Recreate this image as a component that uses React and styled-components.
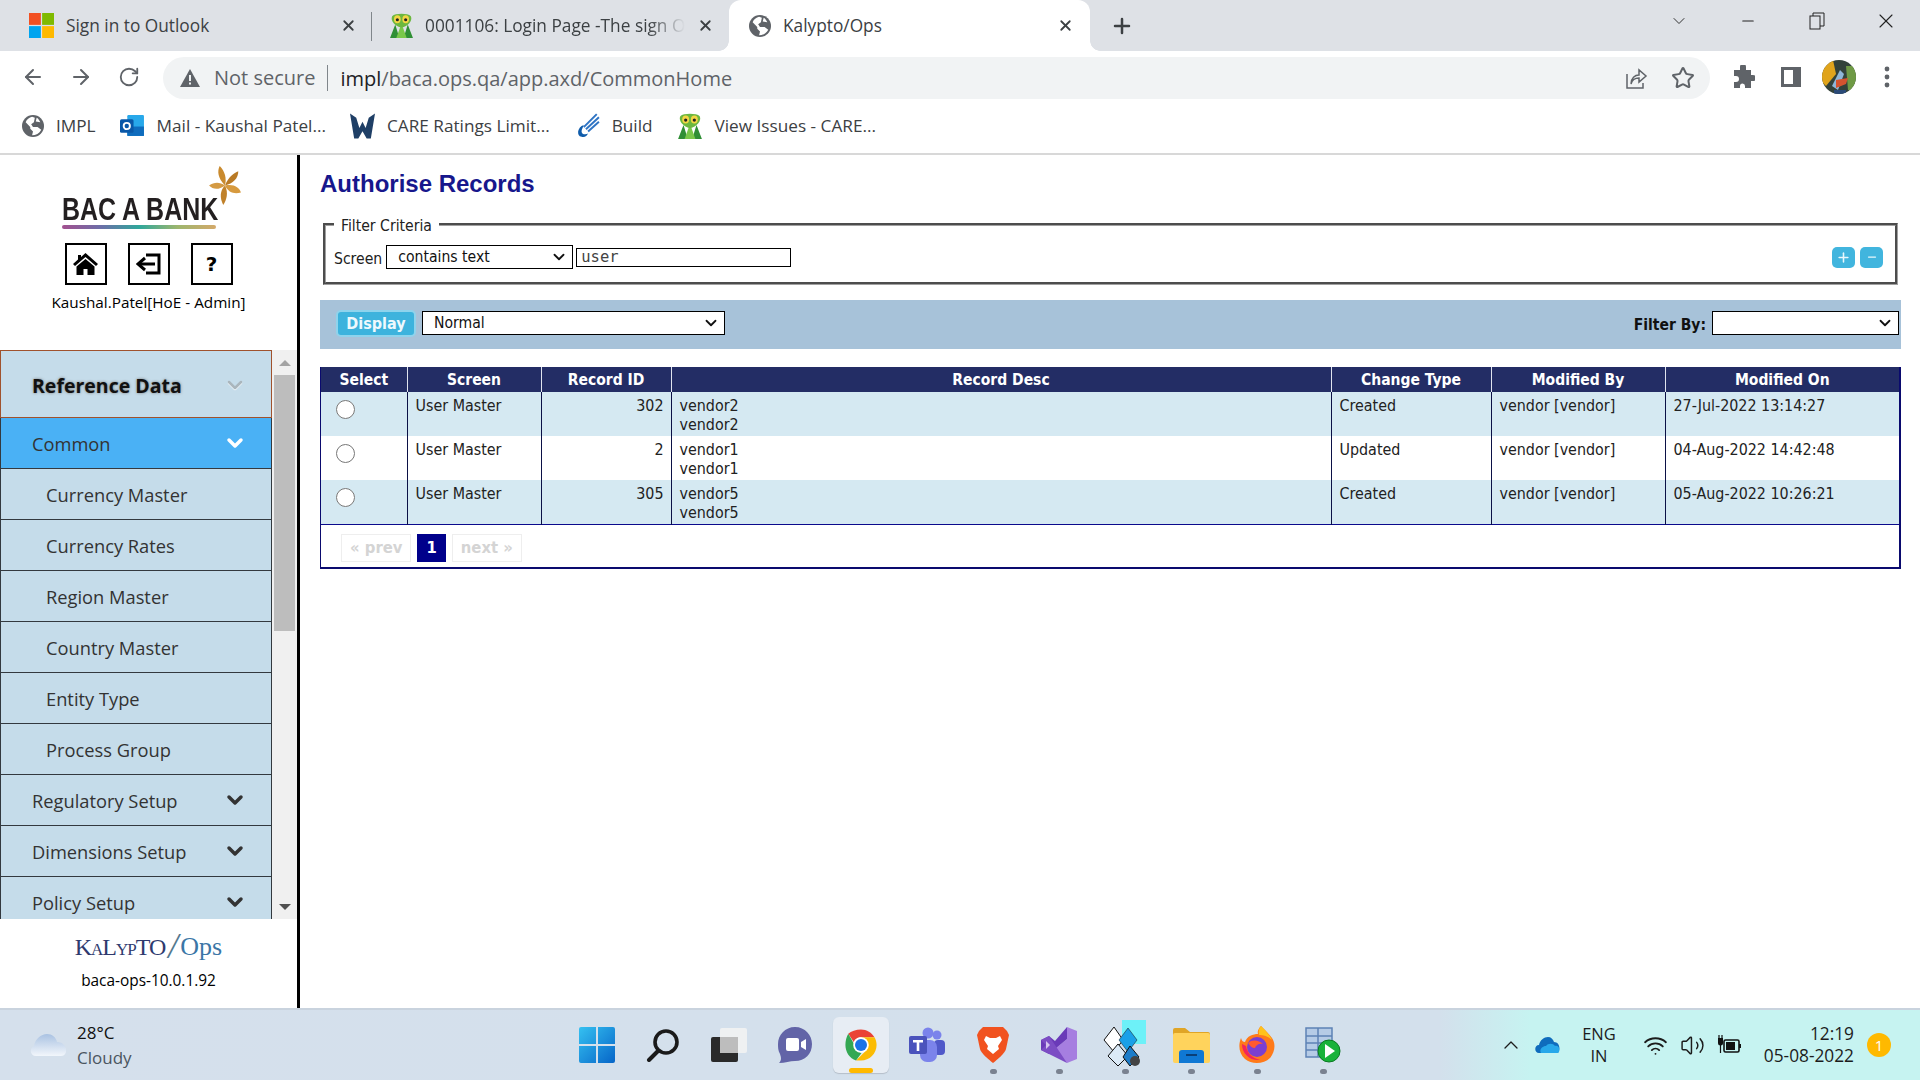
import styled, { createGlobalStyle } from "styled-components";
import { ArrowLeft, ArrowRight, RotateCw, Star, X, Plus, Minus, ChevronDown, ChevronUp, Wifi, Volume2 } from "lucide-react";

const uiFont = `"Open Sans", "Noto Sans", sans-serif`;
const tableFont = `"DejaVu Sans Condensed", "DejaVu Sans", sans-serif`;

const Global = createGlobalStyle`
  html, body { margin: 0; padding: 0; background: #fff; }
  body { font-family: ${uiFont}; overflow: hidden; }
  * { box-sizing: border-box; }
`;

const Page = styled.div`
  width: 1920px;
  height: 1080px;
  display: flex;
  flex-direction: column;
  overflow: hidden;
`;

/* browser chrome */
const TabStrip = styled.div`
  height: 51px;
  background: #dee1e6;
  display: flex;
  align-items: center;
  flex: none;
`;
const Tab = styled.div`
  position: relative;
  width: ${(p) => p.$w}px;
  height: 51px;
  display: flex;
  align-items: center;
  padding-left: ${(p) => p.$pad}px;
  gap: ${(p) => p.$gap || 12}px;
  font-size: 17.3px;
  color: #3c4043;
  background: ${(p) => (p.$active ? "#fff" : "transparent")};
  border-radius: ${(p) => (p.$active ? "12px 12px 0 0" : "0")};
  ${(p) =>
    p.$sep &&
    `&::after { content: ""; position: absolute; right: 0; top: 12px; height: 29px; width: 1px; background: #80868b; }`}
  ${(p) =>
    p.$active &&
    `&::before, &::after { content: ""; position: absolute; bottom: 0; width: 10px; height: 10px; }
     &::before { left: -10px; background: radial-gradient(circle at 0 0, #dee1e6 9.5px, #fff 10px); }
     &::after { right: -10px; background: radial-gradient(circle at 100% 0, #dee1e6 9.5px, #fff 10px); }`}
`;
const TabTitle = styled.span`
  white-space: nowrap;
  ${(p) => p.$fade && "mask-image: linear-gradient(90deg, #000 86%, transparent 100%);"}
`;
const TabClose = styled(X)`
  position: absolute;
  right: ${(p) => p.$r}px;
  top: 17px;
  color: #3c4043;
`;
const NewTab = styled.div`
  margin-left: 20px;
  display: flex;
  color: #3c4043;
`;
const WindowControls = styled.div`
  margin-left: auto;
  display: flex;
  align-items: center;
  height: 42px;
  align-self: flex-start;
`;
const WinButton = styled.div`
  width: 69px;
  display: flex;
  justify-content: center;
  color: #222;
`;
const Toolbar = styled.div`
  height: 51px;
  flex: none;
  display: flex;
  align-items: center;
  position: relative;
  padding-left: 9px;
  background: #fff;
`;
const NavBtn = styled.div`
  width: ${(p) => p.$w || 48}px;
  display: flex;
  justify-content: center;
  color: #5f6368;
`;
const Omnibox = styled.div`
  margin-left: 10px;
  width: 1547px;
  height: 42px;
  margin-top: 3px;
  border-radius: 21px;
  background: #f1f3f4;
  display: flex;
  align-items: center;
  padding: 0 0 0 17px;
  font-size: 20px;
  color: #5f6368;
`;
const NotSecure = styled.span`
  margin-left: 14px;
  padding-right: 12px;
  border-right: 1px solid #80868b;
  line-height: 26px;
`;
const Url = styled.span`
  margin-left: 12px;
  b { font-weight: 400; color: #202124; }
`;
const OmniIcons = styled.div`
  margin-left: auto;
  display: flex;
  align-items: center;
  gap: 23px;
  padding-right: 15px;
  color: #5f6368;
`;
const ToolIcons = styled.div`
  display: flex;
  align-items: center;
  margin-left: 9px;
`;
const Bookmarks = styled.div`
  height: 53px;
  flex: none;
  display: flex;
  align-items: center;
  padding: 0 0 4px 22px;
  gap: 24px;
  border-bottom: 2px solid #d8d8d8;
  font-size: 17.2px;
  color: #3c4043;
`;
const Bookmark = styled.div`
  display: flex;
  align-items: center;
  gap: 12px;
  white-space: nowrap;
`;

/* content */
const Content = styled.div`
  flex: 1;
  display: flex;
  min-height: 0;
`;
const Sidebar = styled.aside`
  width: 300px;
  flex: none;
  border-right: 3px solid #000;
  display: flex;
  flex-direction: column;
`;
const Brand = styled.div`
  height: 195px;
  flex: none;
  display: flex;
  flex-direction: column;
  align-items: center;
  padding-top: 8px;
`;
const BankLogo = styled.div`
  position: relative;
  width: 180px;
  height: 79px;
`;
const BankName = styled.div`
  position: absolute;
  left: 3px;
  top: 27px;
  font-family: "Liberation Sans", sans-serif;
  font-weight: 700;
  font-size: 32px;
  line-height: 38px;
  color: #231f20;
  white-space: nowrap;
  transform: scaleX(0.78);
  transform-origin: left center;
`;
const BankLine = styled.div`
  position: absolute;
  left: 3px;
  top: 62px;
  width: 154px;
  height: 4px;
  border-radius: 2px;
  background: linear-gradient(90deg, #a3508f, #6d6ea8, #2fa79b, #9db66e, #d4a96a);
`;
const BankStar = styled.svg`
  position: absolute;
  left: 150px;
  top: 3px;
`;
const QuickRow = styled.div`
  display: flex;
  gap: 21px;
  margin-top: 1px;
`;
const QuickBtn = styled.div`
  width: 42px;
  height: 42px;
  border: 2px solid #000;
  display: flex;
  align-items: center;
  justify-content: center;
  font-family: "DejaVu Sans", sans-serif;
  font-weight: 700;
  font-size: 20px;
  color: #000;
`;
const UserName = styled.div`
  margin-top: 7px;
  font-size: 15.3px;
  line-height: 20px;
  color: #000;
`;
const MenuArea = styled.div`
  height: 569px;
  flex: none;
  display: flex;
  background: #f0f0f0;
`;
const Menu = styled.nav`
  width: 272px;
  flex: none;
  overflow: hidden;
`;
const MenuHead = styled.div`
  height: 68px;
  background: #c5dcea;
  border: 1px solid #a0522d;
  display: flex;
  align-items: center;
  justify-content: space-between;
  padding: 2px 24px 0 31px;
  font-size: 19.5px;
  font-weight: 700;
  color: #111;
  text-shadow: 0 0 3px #777;
  svg { filter: drop-shadow(0 1px 0 #eef4f8); }
`;
const MenuItem = styled.div`
  height: 51px;
  flex: none;
  background: ${(p) => (p.$open ? "#4ab1f5" : "#c5dcea")};
  border: 1px solid #33393f;
  border-top: none;
  display: flex;
  align-items: center;
  justify-content: space-between;
  padding: 0 24px 0 ${(p) => (p.$sub ? 45 : 31)}px;
  font-size: 18.3px;
  color: #333;
  svg { color: ${(p) => (p.$open ? "#fff" : "#333")}; }
`;
const ScrollBar = styled.div`
  width: 21px;
  margin-left: 2px;
  display: flex;
  flex-direction: column;
  align-items: center;
`;
const Arrow = styled.div`
  height: 25px;
  display: flex;
  align-items: center;
  justify-content: center;
  &::before {
    content: "";
    border-left: 6px solid transparent;
    border-right: 6px solid transparent;
    ${(p) => (p.$up ? "border-bottom: 6px solid #a3a3a3;" : "border-top: 6px solid #505050;")}
  }
`;
const Thumb = styled.div`
  width: 21px;
  height: 256px;
  background: #bdbdbd;
`;
const Spacer = styled.div`
  flex: 1;
`;
const SideFoot = styled.div`
  flex: 1;
  display: flex;
  flex-direction: column;
  align-items: center;
`;
const Kalypto = styled.div`
  margin-top: 10px;
  height: 35px;
  font-family: "Liberation Serif", serif;
  font-size: 17px;
  line-height: 35px;
  color: #2f3a6e;
  letter-spacing: -1px;
  white-space: nowrap;
  b { font-weight: 400; font-size: 24px; }
  i { font-size: 36px; font-weight: 400; color: #54798f; margin: 0 3px; vertical-align: -3px; }
  em { font-style: normal; font-size: 26px; color: #3b76a6; letter-spacing: 0; }
`;
const Version = styled.div`
  margin-top: 7px;
  font-size: 15.4px;
  line-height: 20px;
  color: #000;
`;

const Main = styled.main`
  flex: 1;
  min-width: 0;
  padding: 14px 19px 0 20px;
  display: flex;
  flex-direction: column;
`;
const Title = styled.h1`
  margin: 0;
  font-family: "Liberation Sans", sans-serif;
  font-size: 24px;
  line-height: 30px;
  font-weight: 700;
  color: #17178c;
`;
const Fieldset = styled.fieldset`
  margin: 14px 3px 0 3px;
  padding: 9px 13px 0 8px;
  height: 72px;
  border: 3px groove #a0a0a0;
  min-width: 0;
  font-family: ${tableFont};
  font-size: 15.6px;
  color: #222;
`;
const Legend = styled.legend`
  padding: 4px 7px 0;
  font-size: 15.6px;
  line-height: 19px;
`;
const FilterRow = styled.div`
  display: flex;
  align-items: center;
`;
const FilterLabel = styled.label`
  margin-top: 3px;
  margin-right: 4px;
`;
const Dropdown = styled.div`
  position: relative;
  flex: none;
  width: ${(p) => p.$w}px;
  height: 24px;
  svg {
    position: absolute;
    right: 5px;
    top: 3px;
    color: #111;
    pointer-events: none;
  }
`;
const Select = styled.select`
  appearance: none;
  display: block;
  width: 100%;
  height: 100%;
  border: 1.5px solid #000;
  border-radius: 0;
  background-color: #fff;
  padding-left: 11px;
  font-family: ${tableFont};
  font-size: 15.6px;
  color: #111;
`;
const TextBox = styled.input`
  width: 215px;
  height: 19px;
  margin-left: 3px;
  border: 1.5px solid #000;
  padding: 0 4px;
  font-family: "DejaVu Sans Mono", monospace;
  font-size: 15.5px;
  color: #444;
  outline: none;
`;
const MiniBtns = styled.div`
  margin-left: auto;
  display: flex;
  gap: 5px;
  margin-right: -1px;
`;
const MiniBtn = styled.div`
  width: 23px;
  height: 21px;
  border-radius: 5px;
  background: #41b5de;
  color: #e8f7fc;
  display: flex;
  align-items: center;
  justify-content: center;
`;
const Band = styled.div`
  margin-top: 15px;
  height: 49px;
  background: #a7c2d9;
  display: flex;
  align-items: center;
  padding: 0 2px 3px 16px;
`;
const DisplayBtn = styled.button`
  width: 80px;
  height: 27px;
  margin-right: 6px;
  background: #3db3dd;
  border: 2px solid #8fd3ec;
  border-radius: 5px;
  color: #eef9fd;
  font-family: ${tableFont};
  font-size: 16px;
  font-weight: 700;
  padding: 0;
`;
const FilterBy = styled.label`
  margin-left: auto;
  margin-right: 6px;
  margin-top: 3px;
  font-family: ${tableFont};
  font-size: 15.5px;
  font-weight: 700;
  color: #111;
`;
const Grid = styled.div`
  margin-top: 18px;
  width: 1581px;
  height: 202px;
  border-right: 2px solid #0a0a6e;
  border-left: 1px solid #0a0a6e;
  border-bottom: 2px solid #0a0a6e;
`;
const Table = styled.table`
  width: 100%;
  border-collapse: collapse;
  table-layout: fixed;
  font-family: ${tableFont};
  font-size: 15.9px;
  line-height: 19px;
  color: #222;
  border-bottom: 1px solid #0a0a8c;
`;
const Th = styled.th`
  height: 25px;
  padding: 2px 0 0;
  background: #232d65;
  color: #fff;
  font-size: 15.5px;
  line-height: 19px;
  font-weight: 700;
  border-left: 1px solid #dfe3ee;
  &:first-child { border-left: none; }
`;
const Tr = styled.tr`
  height: 44px;
  background: ${(p) => (p.$alt ? "#d5e9f2" : "#fff")};
`;
const Td = styled.td`
  padding: 4px 7px 0 8px;
  vertical-align: top;
  border-left: 1px solid #0b1146;
  text-align: ${(p) => (p.$right ? "right" : "left")};
  &:first-child { border-left: none; padding: 8px 0 0 15px; }
`;
const Radio = styled.input`
  width: 19px;
  height: 19px;
  margin: 0;
  display: block;
`;
const Pager = styled.div`
  display: flex;
  gap: 6px;
  padding: 9px 0 0 20px;
  font-family: ${tableFont};
  font-weight: 700;
  font-size: 16.5px;
`;
const PageBtn = styled.div`
  height: 28px;
  padding: 0 8px;
  min-width: ${(p) => (p.$current ? 28 : 68)}px;
  display: flex;
  align-items: center;
  justify-content: center;
  color: ${(p) => (p.$current ? "#fff" : "#d4d4d4")};
  background: ${(p) => (p.$current ? "#00008b" : "#fff")};
  border: 1px solid ${(p) => (p.$current ? "#00008b" : "#eeeeee")};
`;

/* taskbar */
const Taskbar = styled.div`
  height: 72px;
  flex: none;
  display: flex;
  align-items: center;
  background: linear-gradient(90deg, #d5e0ec 0, #d3e0ec 1440px, #c6f3f1 1530px);
  border-top: 2px solid #c9d3de;
  position: relative;
`;
const Weather = styled.div`
  width: 564px;
  flex: none;
  display: flex;
  align-items: center;
  gap: 10px;
  padding-left: 29px;
  font-size: 17px;
  line-height: 25px;
  color: #111;
  small { display: block; font-size: 17px; color: #4b5560; }
`;
const AppSlots = styled.div`
  display: flex;
`;
const AppSlot = styled.div`
  position: relative;
  width: 66px;
  height: 56px;
  display: flex;
  align-items: center;
  justify-content: center;
  border-radius: 6px;
  ${(p) => p.$active && "background: #e7edf4; box-shadow: 0 1px 1px #b5bec9; width: 56px; margin: 0 5px;"}
  ${(p) =>
    p.$dot &&
    `&::after { content: ""; position: absolute; left: 30px; bottom: -1px; width: 7px; height: 5px; border-radius: 3px; background: #7a8290; }`}
  ${(p) =>
    p.$active &&
    `&::after { content: ""; position: absolute; left: 16px; bottom: 0; width: 24px; height: 5px; border-radius: 3px; background: #ffb900; }`}
`;
const Tray = styled.div`
  margin-left: 143px;
  display: flex;
  align-items: center;
  color: #1c1c1c;
`;
const TrayGap = styled.span`
  width: 12px;
`;
const Lang = styled.div`
  width: 34px;
  margin-left: 22px;
  font-size: 16.5px;
  line-height: 22px;
  text-align: center;
`;
const TrayIcons = styled.div`
  margin-left: 27px;
  display: flex;
  align-items: center;
  gap: 12px;
`;
const Clock = styled.div`
  width: 100px;
  margin-left: 12px;
  text-align: right;
  font-size: 17.3px;
  line-height: 22px;
`;
const Badge = styled.div`
  width: 24px;
  height: 24px;
  margin-left: 13px;
  border-radius: 50%;
  background: #ffb900;
  color: #fff;
  font-size: 15px;
  display: flex;
  align-items: center;
  justify-content: center;
`;

/* drawings */
const MsLogo = () => (
  <svg width="25" height="25" viewBox="0 0 24 24">
    <rect width="11.4" height="11.4" fill="#f25022" />
    <rect x="12.6" width="11.4" height="11.4" fill="#7fba00" />
    <rect y="12.6" width="11.4" height="11.4" fill="#00a4ef" />
    <rect x="12.6" y="12.6" width="11.4" height="11.4" fill="#ffb900" />
  </svg>
);
const Mantis = ({ s = 25 }) => (
  <svg width={s} height={s} viewBox="0 0 24 24">
    <path d="M1 24 L6 11 L10 24Z M23 24 L18 11 L14 24Z" fill="#2f8f35" />
    <path d="M7 24 L12 10 L17 24Z" fill="#79c84a" />
    <path d="M3 3 C6 0 18 0 21 3 C23 7 18 13 12 14 C6 13 1 7 3 3Z" fill="#6cb83f" />
    <ellipse cx="8" cy="6" rx="3.200" ry="3.800" fill="#f3d545" />
    <ellipse cx="16" cy="6" rx="3.200" ry="3.800" fill="#f3d545" />
    <circle cx="8" cy="6.500" r="1.500" fill="#222" />
    <circle cx="16" cy="6.500" r="1.500" fill="#222" />
  </svg>
);
const Globe = ({ s = 22 }) => (
  <svg width={s} height={s} viewBox="0 0 24 24">
    <circle cx="12" cy="12" r="12" fill="#5f6368" />
    <path d="M11 2 C8 3 5 5 4 8 L9 13 L9 15 L12 18 L11 22 C15 22 19 20 21 16 L17 13 L12 13 L10 10 L13 8 L14 3Z M16 3 L15 7 L20 8 C19 6 18 4 16 3Z" fill="#fff" />
  </svg>
);
const Warn = () => (
  <svg width="20" height="18" viewBox="0 0 20 18">
    <path d="M10 0 L20 18 H0Z" fill="#5f6368" />
    <rect x="9" y="6" width="2" height="6" fill="#f1f3f4" />
    <rect x="9" y="13.5" width="2" height="2" fill="#f1f3f4" />
  </svg>
);
const ShareIcon = () => (
  <svg width="24" height="24" viewBox="0 0 24 24" fill="none" stroke="#5f6368" strokeWidth="1.5">
    <path d="M3 8 V22 H19 V17" />
    <path d="M7 18 C7 12 11 9 15 9 V4 L22 10 L15 16 V12 C11 12 8 14 7 18Z" />
  </svg>
);
const PuzzleIcon = () => (
  <svg width="24" height="24" viewBox="0 0 24 24" fill="#5f6368">
    <path d="M9 2 a3 3 0 0 1 6 0 V5 H20 V10 h2 a3 3 0 0 1 0 6 h-2 V23 H14 v-2 a2.5 2.5 0 0 0 -5 0 v2 H3 V17 h2 a3 3 0 0 0 0 -6 H3 V5 H9Z" />
  </svg>
);
const PanelIcon = () => (
  <svg width="22" height="22" viewBox="0 0 22 22">
    <path fillRule="evenodd" d="M1 1 H21 V21 H1Z M4 4 V18 H13 V4Z" fill="#5f6368" />
  </svg>
);
const Avatar = () => (
  <svg width="34" height="34" viewBox="0 0 34 34">
    <clipPath id="av"><circle cx="17" cy="17" r="17" /></clipPath>
    <g clipPath="url(#av)">
      <rect width="34" height="34" fill="#33423a" />
      <path d="M0 6 L11 0 L14 14 L4 26 L0 22Z" fill="#e0a41c" />
      <path d="M24 6 H34 V30 H26Z" fill="#6f9a45" />
      <path d="M10 26 L18 10 L22 14 L16 30Z" fill="#8fb6d8" />
      <path d="M14 20 L26 18 L24 24 L14 28Z" fill="#d5532f" />
      <path d="M12 30 H24 V34 H12Z" fill="#2b4a78" />
    </g>
  </svg>
);
const Dots = () => (
  <svg width="6" height="22" viewBox="0 0 6 22" fill="#5f6368">
    <circle cx="3" cy="3" r="2.4" /><circle cx="3" cy="11" r="2.4" /><circle cx="3" cy="19" r="2.4" />
  </svg>
);
const OutlookIcon = () => (
  <svg width="25" height="25" viewBox="0 0 24 24">
    <rect x="7" y="2" width="16" height="20" rx="1" fill="#28a8ea" />
    <path d="M7 13 L23 13 V22 H7Z" fill="#0f6cbd" />
    <rect x="0" y="6" width="13" height="13" rx="1.5" fill="#0a58a8" />
    <circle cx="6.5" cy="12.5" r="3" fill="none" stroke="#fff" strokeWidth="1.8" />
  </svg>
);
const WLogo = () => (
  <svg width="25" height="26" viewBox="0 0 24 24">
    <path d="M0 0 L6 4 L9 14 L12 8 L15 14 L18 4 L24 0 L20 24 H16 L12 17 L8 24 H4Z" fill="#1f3f66" />
  </svg>
);
const BuildIcon = () => (
  <svg width="26" height="26" viewBox="0 0 24 24" fill="none">
    <path d="M21 1 L9 13 M23 4 L11 15 M23 8 L13 17" stroke="#2f74c4" strokeWidth="1.8" />
    <path d="M9 11 C3 13 2 21 7 22 C10 23 12 21 13 19 C11 20 7 20 7 17 C7 15 8 14 9 11Z" fill="#0f5cab" />
  </svg>
);
const Flower = () => (
  <BankStar width="32" height="39" viewBox="0 0 36 44">
    <path d="M18 22 C10 14 9 6 12 0 C18 6 20 14 18 22Z" fill="#c98a2e" />
    <path d="M18 22 C22 12 28 8 33 6 C33 14 27 20 18 22Z" fill="#b97a25" />
    <path d="M18 22 C28 20 34 24 36 30 C28 32 22 30 18 22Z" fill="#d79a3e" />
    <path d="M18 22 C22 30 20 38 16 44 C12 36 12 28 18 22Z" fill="#c0812a" />
    <path d="M18 22 C10 28 4 26 0 22 C6 18 12 18 18 22Z" fill="#d49a43" />
  </BankStar>
);
const HomeIcon = () => (
  <svg width="25" height="22" viewBox="0 0 25 22" fill="#000">
    <path d="M12.500 0 L25 11 L23 13 L12.500 4 L2 13 L0 11 L5 6.600 V2 H8 V4Z" />
    <path fillRule="evenodd" d="M12.500 6 L21.500 13.500 V22 H14.500 V16 H10.500 V22 H3.500 V13.500Z" />
  </svg>
);
const LogoutIcon = () => (
  <svg width="26" height="22" viewBox="0 0 26 22" fill="none" stroke="#000">
    <path d="M10 2 H23 V20 H10" strokeWidth="3" />
    <path d="M19 11 H3" strokeWidth="3" />
    <path d="M9 5 L2 11 L9 17" strokeWidth="3" />
  </svg>
);
const Cloud = () => (
  <svg width="38" height="24" viewBox="0 0 38 24">
    <defs>
      <linearGradient id="cl" x1="0" y1="0" x2="0" y2="1">
        <stop offset="0" stopColor="#a9c2e2" />
        <stop offset="1" stopColor="#f2f6fb" />
      </linearGradient>
    </defs>
    <path d="M7 23 C1 23 0 15 5 13 C6 6 12 1 18 1 C23 1 27 4 28 9 C34 9 38 14 37 19 C36 22 34 23 32 23Z" fill="url(#cl)" />
  </svg>
);
const WinIcon = () => (
  <svg width="36" height="36" viewBox="0 0 36 36">
    <defs>
      <linearGradient id="wn" x1="0" y1="0" x2="1" y2="1">
        <stop offset="0" stopColor="#35c1f1" />
        <stop offset="1" stopColor="#0665c8" />
      </linearGradient>
    </defs>
    <path d="M0 2 a2 2 0 0 1 2 -2 H17 V17 H0Z M19 0 H34 a2 2 0 0 1 2 2 V17 H19Z M0 19 H17 V36 H2 a2 2 0 0 1 -2 -2Z M19 19 H36 V34 a2 2 0 0 1 -2 2 H19Z" fill="url(#wn)" />
  </svg>
);
const SearchIcon = () => (
  <svg width="34" height="34" viewBox="0 0 34 34" fill="none" stroke="#1a1a1a">
    <circle cx="20" cy="14" r="11" strokeWidth="3.6" />
    <path d="M12 23 L3 32" strokeWidth="4" strokeLinecap="round" />
  </svg>
);
const TaskViewIcon = () => (
  <svg width="36" height="34" viewBox="0 0 36 34">
    <rect x="0" y="9" width="27" height="25" rx="2" fill="#2a2a2a" />
    <rect x="9" y="0" width="27" height="25" rx="2" fill="#f3f3f3" opacity=".85" />
    <rect x="9" y="9" width="18" height="16" fill="#bdbdbd" />
  </svg>
);
const ChatIcon = () => (
  <svg width="34" height="36" viewBox="0 0 34 36">
    <path d="M17 0 C27 0 34 8 34 17 C34 27 27 34 17 34 C12 34 7 36 1 36 C4 33 3 30 2 27 C0 24 0 20 0 17 C0 8 7 0 17 0Z" fill="#6264a7" />
    <rect x="8" y="11" width="13" height="13" rx="2" fill="#fff" />
    <path d="M23 15 L28 12 V23 L23 20Z" fill="#fff" />
  </svg>
);
const ChromeIcon = () => (
  <svg width="34" height="34" viewBox="0 0 48 48">
    <path d="M24 2 C32 2 39.500 6.500 43 13 L24 13 C19 13 15 16 14 20 L6 8 C10 4.500 17 2 24 2Z" fill="#ea4335" />
    <path d="M6 8 L15 24 C16 30 20 34 25 35 L17 46 C8 43 2 34 2 24 C2 18 3.500 12.500 6 8Z" fill="#34a853" />
    <path d="M43 13 C45 16 46 20 46 24 C46 36 36 46 24 46 L17 46 L32 31 C34 28 34 21 32 17 L24 13Z" fill="#fbbc04" />
    <circle cx="24" cy="24" r="11" fill="#fff" />
    <circle cx="24" cy="24" r="8.500" fill="#1a73e8" />
  </svg>
);
const TeamsIcon = () => (
  <svg width="36" height="36" viewBox="0 0 36 36">
    <circle cx="28" cy="8" r="4.500" fill="#7b83eb" />
    <circle cx="19" cy="6" r="5.500" fill="#7b83eb" />
    <rect x="25" y="13" width="11" height="15" rx="4" fill="#5059c9" />
    <rect x="11" y="13" width="17" height="22" rx="7" fill="#7b83eb" />
    <rect x="0" y="9" width="18" height="18" rx="2" fill="#4b53bc" />
    <path d="M4 13 H14 V15.500 H10.300 V24 H7.700 V15.500 H4Z" fill="#fff" />
  </svg>
);
const BraveIcon = () => (
  <svg width="32" height="36" viewBox="0 0 32 36">
    <path d="M6 0 H26 L30 4 L32 8 L29 22 C28 26 20 33 16 36 C12 33 4 26 3 22 L0 8 L2 4Z" fill="#f1521f" />
    <path d="M9 9 L13 11 H19 L23 9 L25 13 L21 19 L22 22 L16 27 L10 22 L11 19 L7 13Z" fill="#fff" />
  </svg>
);
const VsIcon = () => (
  <svg width="36" height="36" viewBox="0 0 36 36">
    <path d="M26 0 L36 4 V32 L26 36 L14 22 L26 12Z" fill="#a67ee0" />
    <path d="M26 0 V12 L8 27 L0 23 V13 L8 9 L14 14Z" fill="#6a3ab8" />
    <path d="M0 13 L8 9 L26 36 L8 27 L0 23 L5 18Z" fill="#7c4dc4" />
    <path d="M5 14 V22 L9 18Z" fill="#d5c4ef" />
  </svg>
);
const StackIcon = () => (
  <svg width="44" height="50" viewBox="0 0 44 50">
    <rect x="19" y="0" width="24" height="24" fill="#6df1f8" />
    <path d="M11 7 L20 20 L11 32 L1 20Z" fill="#fff" stroke="#111" />
    <path d="M25 8 L34 20 L25 32 L16 20Z" fill="#1aa0e8" stroke="#111" strokeWidth=".5" />
    <path d="M15 24 L25 36 L15 46 L5 36Z" fill="#dbeaf7" stroke="#111" />
    <path d="M27 26 L36 37 L27 46 L20 37Z" fill="#1c7cc9" stroke="#111" />
    <circle cx="32" cy="41" r="5" fill="#444" />
  </svg>
);
const FolderIcon = () => (
  <svg width="37" height="36" viewBox="0 0 37 36">
    <path d="M0 3 a2 2 0 0 1 2 -2 H12 L17 5 H35 a2 2 0 0 1 2 2 V10 H0Z" fill="#e0a526" />
    <rect y="6" width="37" height="30" rx="2" fill="#ffd35c" />
    <path d="M6 36 V26 a3 3 0 0 1 3 -3 H28 a3 3 0 0 1 3 3 V36Z" fill="#0f78d4" />
    <rect x="13" y="27" width="11" height="2" fill="#0a3f78" />
  </svg>
);
const FirefoxIcon = () => (
  <svg width="36" height="38" viewBox="0 0 36 38">
    <path d="M22 0 C26 4 30 8 33 12 C37 18 36 26 31 32 C25 38 13 39 6 33 C0 28 -1 19 2 12 C3 15 4 16 6 16 C8 10 14 8 19 8 C18 5 20 2 22 0Z" fill="#ff7a1a" />
    <path d="M22 0 C26 4 31 9 33 14 C29 10 24 9 20 9 C19 5 20 2 22 0Z" fill="#ffc21a" />
    <circle cx="18" cy="21" r="10" fill="#7b3fd0" />
    <path d="M9 17 C13 13 20 14 24 18 C20 17 17 19 16 22 C13 22 11 20 9 17Z" fill="#ff5a2d" />
    <path d="M3 18 C3 28 11 35 21 34 C13 32 8 27 7 20Z" fill="#f3255b" />
  </svg>
);
const PlayTableIcon = () => (
  <svg width="36" height="36" viewBox="0 0 36 36">
    <rect x="1" y="1" width="26" height="29" fill="#b5cbe6" stroke="#5e82b5" strokeWidth="1.5" />
    <path d="M1 9 H27 M1 16 H27 M1 23 H27 M13 1 V30" stroke="#5e82b5" strokeWidth="1.5" />
    <circle cx="24" cy="24" r="11" fill="#19b23a" stroke="#0b7a22" />
    <path d="M20 17 L30 24 L20 31Z" fill="#fff" />
  </svg>
);
const OneDrive = () => (
  <svg width="25" height="16" viewBox="0 0 25 16">
    <path d="M4 16 C-1 16 -1 8 4 8 C5 3 9 0 13 0 C16 0 18 2 19 5 C24 5 26 11 23 16Z" fill="#0f6cbd" />
    <path d="M6 16 C4 13 7 9 11 9 C13 6 18 6 20 9 C24 8 26 13 23 16Z" fill="#28a8ea" />
  </svg>
);
const BatteryPlug = () => (
  <svg width="25" height="20" viewBox="0 0 25 20" fill="#111">
    <rect x="7" y="5" width="15" height="12" rx="1.5" fill="none" stroke="#111" strokeWidth="1.600" />
    <rect x="9" y="7" width="9" height="8" />
    <rect x="22" y="9" width="2" height="4" />
    <path d="M1 3 H6 V8 a2.500 2.500 0 0 1 -5 0Z" />
    <path d="M2 0 V3 M5 0 V3 M3.500 10 V18" stroke="#111" strokeWidth="1.200" />
  </svg>
);

const subItems = ["Currency Master", "Currency Rates", "Region Master", "Country Master", "Entity Type", "Process Group"];
const groups = ["Regulatory Setup", "Dimensions Setup", "Policy Setup"];
const columns = [
  ["Select", 86],
  ["Screen", 134],
  ["Record ID", 130],
  ["Record Desc", 660],
  ["Change Type", 160],
  ["Modified By", 174],
  ["Modified On", 234],
];
const rows = [
  { id: 302, name: "vendor2", type: "Created", on: "27-Jul-2022 13:14:27" },
  { id: 2, name: "vendor1", type: "Updated", on: "04-Aug-2022 14:42:48" },
  { id: 305, name: "vendor5", type: "Created", on: "05-Aug-2022 10:26:21" },
];

function DropdownField({ w, children, ...rest }) {
  return (
    <Dropdown $w={w}>
      <Select {...rest}>{children}</Select>
      <ChevronDown size={18} strokeWidth={2.4} />
    </Dropdown>
  );
}

export default function App() {
  return (
    <Page>
      <Global />
      <TabStrip>
        <Tab $w={372} $pad={29} $sep>
          <MsLogo />
          <TabTitle>Sign in to Outlook</TabTitle>
          <TabClose size={17} strokeWidth={2.5} $r={15} />
        </Tab>
        <Tab $w={357} $pad={17} $gap={11}>
          <Mantis />
          <TabTitle $fade>0001106: Login Page -The sign O</TabTitle>
          <TabClose size={17} strokeWidth={2.5} $r={15} />
        </Tab>
        <Tab $w={361} $pad={20} $active>
          <Globe />
          <TabTitle>Kalypto/Ops</TabTitle>
          <TabClose size={17} strokeWidth={2.5} $r={16} />
        </Tab>
        <NewTab><Plus size={24} strokeWidth={2.5} /></NewTab>
        <WindowControls>
          <WinButton><ChevronDown size={20} strokeWidth={1.1} /></WinButton>
          <WinButton><Minus size={18} strokeWidth={1.4} /></WinButton>
          <WinButton>
            <svg width="16" height="18" viewBox="0 0 16 18" fill="none" stroke="#222">
              <rect x="1" y="4" width="10" height="13" />
              <path d="M4 4 V1 H15 V14 H11" />
            </svg>
          </WinButton>
          <WinButton><X size={24} strokeWidth={1.1} /></WinButton>
        </WindowControls>
      </TabStrip>

      <Toolbar>
        <NavBtn><ArrowLeft size={24} strokeWidth={2} /></NavBtn>
        <NavBtn><ArrowRight size={24} strokeWidth={2} /></NavBtn>
        <NavBtn><RotateCw size={22} strokeWidth={2} /></NavBtn>
        <Omnibox>
          <Warn />
          <NotSecure>Not secure</NotSecure>
          <Url><b>impl</b>/baca.ops.qa/app.axd/CommonHome</Url>
          <OmniIcons>
            <ShareIcon />
            <Star size={24} strokeWidth={2} />
          </OmniIcons>
        </Omnibox>
        <ToolIcons>
          <NavBtn><PuzzleIcon /></NavBtn>
          <NavBtn><PanelIcon /></NavBtn>
          <NavBtn><Avatar /></NavBtn>
          <NavBtn><Dots /></NavBtn>
        </ToolIcons>
      </Toolbar>

      <Bookmarks>
        <Bookmark><Globe /><span>IMPL</span></Bookmark>
        <Bookmark><OutlookIcon /><span>Mail - Kaushal Patel...</span></Bookmark>
        <Bookmark><WLogo /><span>CARE Ratings Limit...</span></Bookmark>
        <Bookmark><BuildIcon /><span>Build</span></Bookmark>
        <Bookmark><Mantis s={26} /><span>View Issues - CARE...</span></Bookmark>
      </Bookmarks>

      <Content>
        <Sidebar>
          <Brand>
            <BankLogo>
              <BankName>BAC A BANK</BankName>
              <BankLine />
              <Flower />
            </BankLogo>
            <QuickRow>
              <QuickBtn><HomeIcon /></QuickBtn>
              <QuickBtn><LogoutIcon /></QuickBtn>
              <QuickBtn>?</QuickBtn>
            </QuickRow>
            <UserName>Kaushal.Patel[HoE - Admin]</UserName>
          </Brand>
          <MenuArea>
            <Menu>
              <MenuHead>
                <span>Reference Data</span>
                <ChevronDown size={24} strokeWidth={2.5} color="#aab6bd" />
              </MenuHead>
              <MenuItem $open>
                <span>Common</span>
                <ChevronDown size={24} strokeWidth={3.5} />
              </MenuItem>
              {subItems.map((item) => (
                <MenuItem key={item} $sub>{item}</MenuItem>
              ))}
              {groups.map((item) => (
                <MenuItem key={item}>
                  <span>{item}</span>
                  <ChevronDown size={24} strokeWidth={3.5} />
                </MenuItem>
              ))}
            </Menu>
            <ScrollBar>
              <Arrow $up />
              <Thumb />
              <Spacer />
              <Arrow />
            </ScrollBar>
          </MenuArea>
          <SideFoot>
            <Kalypto>
              <b>K</b>A<b>L</b>YP<b>TO</b><i>/</i><em>Ops</em>
            </Kalypto>
            <Version>baca-ops-10.0.1.92</Version>
          </SideFoot>
        </Sidebar>

        <Main>
          <Title>Authorise Records</Title>
          <Fieldset>
            <Legend>Filter Criteria</Legend>
            <FilterRow>
              <FilterLabel>Screen</FilterLabel>
              <DropdownField w={187} defaultValue="contains">
                <option value="contains">contains text</option>
              </DropdownField>
              <TextBox defaultValue="user" />
              <MiniBtns>
                <MiniBtn><Plus size={15} strokeWidth={2.5} /></MiniBtn>
                <MiniBtn><Minus size={12} strokeWidth={2.5} /></MiniBtn>
              </MiniBtns>
            </FilterRow>
          </Fieldset>
          <Band>
            <DisplayBtn>Display</DisplayBtn>
            <DropdownField w={303} defaultValue="normal">
              <option value="normal">Normal</option>
            </DropdownField>
            <FilterBy>Filter By:</FilterBy>
            <DropdownField w={187}>
              <option value=""></option>
            </DropdownField>
          </Band>
          <Grid>
            <Table>
              <colgroup>
                {columns.map(([name, w]) => <col key={name} width={w} />)}
              </colgroup>
              <thead>
                <tr>{columns.map(([name]) => <Th key={name}>{name}</Th>)}</tr>
              </thead>
              <tbody>
                {rows.map((row, i) => (
                  <Tr key={row.id} $alt={i % 2 === 0}>
                    <Td><Radio type="radio" name="rec" /></Td>
                    <Td>User Master</Td>
                    <Td $right>{row.id}</Td>
                    <Td>{row.name}<br />{row.name}</Td>
                    <Td>{row.type}</Td>
                    <Td>vendor [vendor]</Td>
                    <Td>{row.on}</Td>
                  </Tr>
                ))}
              </tbody>
            </Table>
            <Pager>
              <PageBtn>« prev</PageBtn>
              <PageBtn $current>1</PageBtn>
              <PageBtn>next »</PageBtn>
            </Pager>
          </Grid>
        </Main>
      </Content>

      <Taskbar>
        <Weather>
          <Cloud />
          <div>28°C<small>Cloudy</small></div>
        </Weather>
        <AppSlots>
          <AppSlot><WinIcon /></AppSlot>
          <AppSlot><SearchIcon /></AppSlot>
          <AppSlot><TaskViewIcon /></AppSlot>
          <AppSlot><ChatIcon /></AppSlot>
          <AppSlot $active><ChromeIcon /></AppSlot>
          <AppSlot><TeamsIcon /></AppSlot>
          <AppSlot $dot><BraveIcon /></AppSlot>
          <AppSlot $dot><VsIcon /></AppSlot>
          <AppSlot $dot><StackIcon /></AppSlot>
          <AppSlot $dot><FolderIcon /></AppSlot>
          <AppSlot $dot><FirefoxIcon /></AppSlot>
          <AppSlot $dot><PlayTableIcon /></AppSlot>
        </AppSlots>
        <Tray>
          <ChevronUp size={24} strokeWidth={1.3} />
          <TrayGap />
          <OneDrive />
          <Lang>ENG<br />IN</Lang>
          <TrayIcons>
            <Wifi size={25} strokeWidth={1.8} />
            <Volume2 size={25} strokeWidth={1.4} />
            <BatteryPlug />
          </TrayIcons>
          <Clock>12:19<br />05-08-2022</Clock>
          <Badge>1</Badge>
        </Tray>
      </Taskbar>
    </Page>
  );
}
